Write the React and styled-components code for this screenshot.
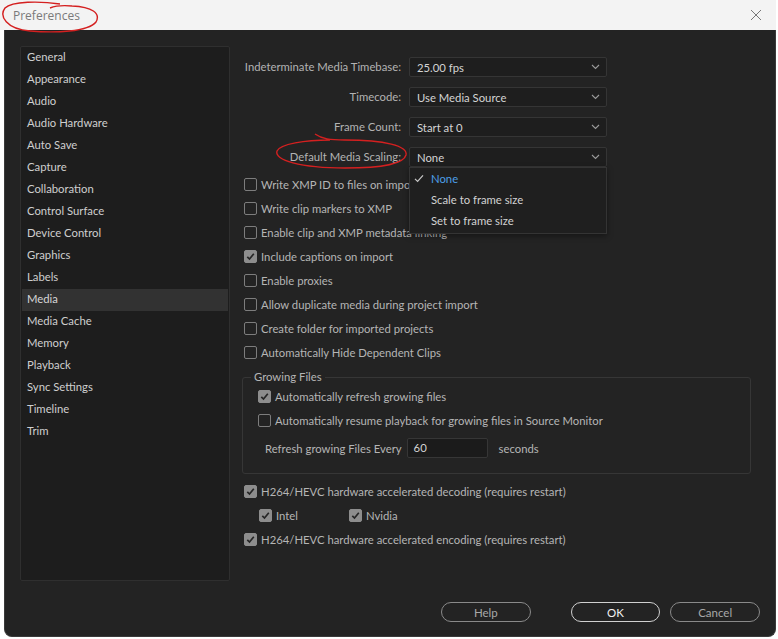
import React from 'react';
import styled, { createGlobalStyle } from 'styled-components';

const GlobalStyle = createGlobalStyle`
    html, body {
        margin: 0;
        padding: 0;
        background: #ffffff;
    }
    body {
        font-family: 'Lato', 'Liberation Sans', sans-serif;
        font-size: 11.3px;
    }
`;

const sections = [
    'General', 'Appearance', 'Audio', 'Audio Hardware', 'Auto Save', 'Capture',
    'Collaboration', 'Control Surface', 'Device Control', 'Graphics', 'Labels',
    'Media', 'Media Cache', 'Memory', 'Playback', 'Sync Settings', 'Timeline', 'Trim',
];

const selects = [
    { label: 'Indeterminate Media Timebase:', value: '25.00 fps' },
    { label: 'Timecode:', value: 'Use Media Source' },
    { label: 'Frame Count:', value: 'Start at 0' },
    { label: 'Default Media Scaling:', value: 'None', open: true },
];

const mediaChecks = [
    { label: 'Write XMP ID to files on import', checked: false },
    { label: 'Write clip markers to XMP', checked: false },
    { label: 'Enable clip and XMP metadata linking', checked: false },
    { label: 'Include captions on import', checked: true },
    { label: 'Enable proxies', checked: false },
    { label: 'Allow duplicate media during project import', checked: false },
    { label: 'Create folder for imported projects', checked: false },
    { label: 'Automatically Hide Dependent Clips', checked: false },
];

function Chevron() {
    return (
        <svg width="9" height="6" viewBox="0 0 9 6">
            <path d="M1 1 L4.5 4.5 L8 1" fill="none" stroke="#9a9a9a" strokeWidth="1.1" />
        </svg>
    );
}

function Check({ checked }) {
    return (
        <Box $checked={checked}>
            {checked && (
                <svg width="11" height="11" viewBox="0 0 11 11">
                    <path d="M2.3 5.8 L4.5 8 L8.8 2.8" fill="none" stroke="#262626" strokeWidth="1.7" />
                </svg>
            )}
        </Box>
    );
}

function CheckRow({ label, checked }) {
    return (
        <Row>
            <Check checked={checked} />
            <RowLabel>{label}</RowLabel>
        </Row>
    );
}

export default function App() {
    return (
        <>
            <GlobalStyle />
            <Window>
                <TitleBar>
                    <Title>Preferences</Title>
                    <svg width="12" height="12" viewBox="0 0 12 12">
                        <path d="M1 1 L11 11 M11 1 L1 11" stroke="#777" strokeWidth="1" />
                    </svg>
                </TitleBar>
                <Body>
                    <Content>
                        <Sidebar>
                            {sections.map((s) => (
                                <SideItem key={s} $active={s === 'Media'}>{s}</SideItem>
                            ))}
                        </Sidebar>
                        <Main>
                            <SelectGrid>
                                {selects.map((s) => (
                                    <React.Fragment key={s.label}>
                                        <FieldLabel>{s.label}</FieldLabel>
                                        <SelectWrap>
                                            <Select>
                                                <span>{s.value}</span>
                                                <Chevron />
                                            </Select>
                                            {s.open && (
                                                <Menu>
                                                    <MenuItem $selected>
                                                        <Tick>
                                                            <svg width="10" height="9" viewBox="0 0 10 9">
                                                                <path d="M1 4.8 L3.6 7.4 L9 1.4" fill="none" stroke="#c8c8c8" strokeWidth="1.2" />
                                                            </svg>
                                                        </Tick>
                                                        None
                                                    </MenuItem>
                                                    <MenuItem><Tick />Scale to frame size</MenuItem>
                                                    <MenuItem><Tick />Set to frame size</MenuItem>
                                                </Menu>
                                            )}
                                        </SelectWrap>
                                    </React.Fragment>
                                ))}
                            </SelectGrid>

                            <CheckList>
                                {mediaChecks.map((c) => (
                                    <CheckRow key={c.label} {...c} />
                                ))}
                            </CheckList>

                            <Group>
                                <Legend>Growing Files</Legend>
                                <CheckRow label="Automatically refresh growing files" checked />
                                <CheckRow label="Automatically resume playback for growing files in Source Monitor" checked={false} />
                                <RefreshRow>
                                    <RowLabel>Refresh growing Files Every</RowLabel>
                                    <NumberInput>60</NumberInput>
                                    <RowLabel>seconds</RowLabel>
                                </RefreshRow>
                            </Group>

                            <CheckList>
                                <CheckRow label="H264/HEVC hardware accelerated decoding (requires restart)" checked />
                                <VendorRow>
                                    <Vendor><Check checked /><RowLabel>Intel</RowLabel></Vendor>
                                    <Vendor><Check checked /><RowLabel>Nvidia</RowLabel></Vendor>
                                </VendorRow>
                                <CheckRow label="H264/HEVC hardware accelerated encoding (requires restart)" checked />
                            </CheckList>
                        </Main>
                    </Content>
                    <Footer>
                        <PillButton>Help</PillButton>
                        <Spacer />
                        <PillButton $primary>OK</PillButton>
                        <PillButton>Cancel</PillButton>
                    </Footer>
                </Body>
                <Annotation width="778" height="180" viewBox="0 0 778 180">
                    <path
                        d="M60 4 C40 1 12 1 5 8 C-1 16 6 29 30 31 C55 33 88 32 96 22 C101 13 92 7 72 6 C62 5 55 6 50 8"
                        fill="none" stroke="#d42020" strokeWidth="1.4"
                    />
                    <path
                        d="M330 140 C305 140 280 144 277 151 C274 160 300 168 345 168 C385 168 404 163 406 155 C408 146 385 140 345 140 C330 140 322 139 315 134"
                        fill="none" stroke="#d42020" strokeWidth="1.4"
                    />
                </Annotation>
            </Window>
        </>
    );
}

const Window = styled.div`
    position: relative;
    width: 772px;
    height: 639px;
    margin-left: 4px;
    display: flex;
    flex-direction: column;
`;

const Annotation = styled.svg`
    position: absolute;
    left: -4px;
    top: 0;
    pointer-events: none;
`;

const TitleBar = styled.div`
    height: 30px;
    margin-left: -4px;
    padding: 0 14px 0 13px;
    background: #f3f3f3;
    display: flex;
    align-items: center;
    justify-content: space-between;
`;

const Title = styled.div`
    font-family: 'Open Sans', 'Liberation Sans', sans-serif;
    font-size: 12px;
    color: #7a7a7a;
`;

const Body = styled.div`
    height: 607px;
    box-sizing: border-box;
    background: #232323;
    border: 1px solid #3a3a3a;
    border-top: none;
    border-radius: 0 0 8px 8px;
    padding: 16px 15px 0 15px;
    display: flex;
    flex-direction: column;
`;

const Content = styled.div`
    display: flex;
    gap: 12px;
    height: 535px;
`;

const Sidebar = styled.div`
    width: 210px;
    box-sizing: border-box;
    background: #1d1d1d;
    border: 1px solid #2f2f2f;
    border-radius: 2px;
    padding: 0 1px;
    display: flex;
    flex-direction: column;
`;

const SideItem = styled.div`
    height: 22px;
    line-height: 20px;
    padding-left: 5px;
    color: ${(p) => (p.$active ? '#d6d6d6' : '#cfcfcf')};
    background: ${(p) => (p.$active ? '#323232' : 'transparent')};
`;

const Main = styled.div`
    flex: 1;
    display: flex;
    flex-direction: column;
    padding-top: 11px;
    padding-right: 9px;
`;

const SelectGrid = styled.div`
    display: grid;
    grid-template-columns: 159px 198px;
    grid-auto-rows: 20px;
    column-gap: 8px;
    row-gap: 10px;
`;

const FieldLabel = styled.div`
    text-align: right;
    line-height: 20px;
    color: #b3b3b3;
    white-space: nowrap;
`;

const SelectWrap = styled.div`
    position: relative;
`;

const Select = styled.div`
    height: 20px;
    box-sizing: border-box;
    background: #1e1e1e;
    border: 1px solid #353535;
    border-radius: 2px;
    padding: 0 6px 0 7px;
    display: flex;
    align-items: center;
    justify-content: space-between;
    color: #d4d4d4;
`;

const Menu = styled.div`
    position: absolute;
    top: 20px;
    left: 0;
    right: 0;
    z-index: 5;
    box-sizing: border-box;
    background: #1f1f1f;
    border: 1px solid #343434;
    padding: 0 0 2px;
    box-shadow: 0 2px 6px rgba(0, 0, 0, 0.4);
`;

const MenuItem = styled.div`
    height: 21px;
    display: flex;
    align-items: center;
    color: ${(p) => (p.$selected ? '#4c9ee6' : '#d2d2d2')};
`;

const Tick = styled.span`
    width: 21px;
    box-sizing: border-box;
    padding-left: 4px;
    display: inline-flex;
    align-items: center;
`;

const CheckList = styled.div`
    display: flex;
    flex-direction: column;
    margin-top: 5px;
`;

const Row = styled.div`
    height: 24px;
    display: flex;
    align-items: center;
    gap: 4px;
    padding-left: 2px;
`;

const Box = styled.span`
    width: 13px;
    height: 13px;
    box-sizing: border-box;
    flex-shrink: 0;
    border-radius: 2px;
    border: 1px solid ${(p) => (p.$checked ? '#8d8d8d' : '#7d7d7d')};
    background: ${(p) => (p.$checked ? '#8d8d8d' : 'transparent')};
    display: inline-flex;
    align-items: center;
    justify-content: center;
`;

const RowLabel = styled.span`
    color: #b5b5b5;
    white-space: nowrap;
`;

const Group = styled.fieldset`
    margin: 6px 0 0 0;
    padding: 0 0 13px 15px;
    border: 1px solid #363636;
    border-radius: 3px;
    display: flex;
    flex-direction: column;
    height: 104px;
    box-sizing: border-box;

    & > ${Row} {
        padding-left: 0;
    }
`;

const Legend = styled.legend`
    color: #b5b5b5;
    padding: 0 3px;
    margin-left: -7px;
    line-height: 14px;
`;

const RefreshRow = styled.div`
    display: flex;
    align-items: center;
    height: 32px;
    padding-left: 7px;
    gap: 5px;

    & > span:last-child {
        margin-left: 6px;
    }
`;

const NumberInput = styled.div`
    width: 81px;
    height: 20px;
    box-sizing: border-box;
    background: #1b1b1b;
    border: 1px solid #363636;
    border-radius: 2px;
    padding-left: 6px;
    line-height: 18px;
    color: #d4d4d4;
`;

const VendorRow = styled.div`
    height: 24px;
    display: flex;
    align-items: center;
    padding-left: 17px;
`;

const Vendor = styled.div`
    width: 90px;
    display: flex;
    align-items: center;
    gap: 4px;
`;

const Footer = styled.div`
    display: flex;
    align-items: center;
    margin-top: 21px;
    padding-left: 421px;
    gap: 10px;
`;

const Spacer = styled.div`
    width: 20px;
`;

const PillButton = styled.button`
    width: 90px;
    height: 20px;
    padding: 0;
    box-sizing: border-box;
    border-radius: 10px;
    background: transparent;
    border: 1px solid ${(p) => (p.$primary ? '#d0d0d0' : '#8a8a8a')};
    color: ${(p) => (p.$primary ? '#f2f2f2' : '#a8a8a8')};
    font-family: 'Lato', 'Liberation Sans', sans-serif;
    font-size: 11.5px;
`;
